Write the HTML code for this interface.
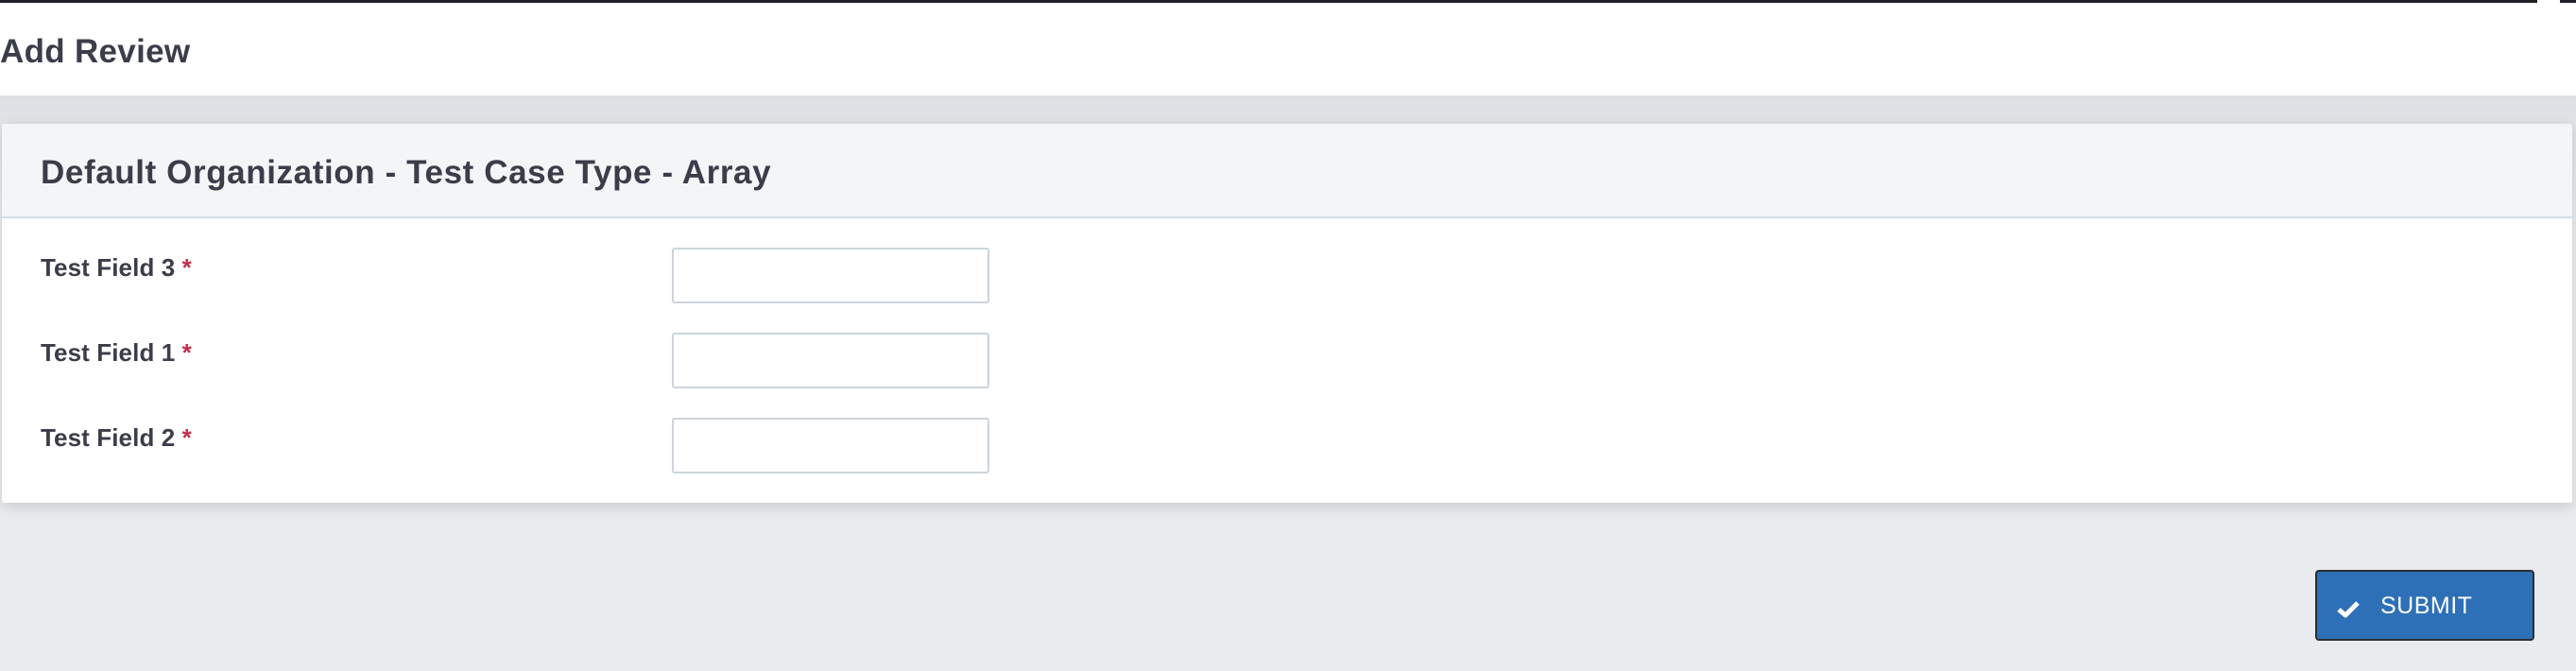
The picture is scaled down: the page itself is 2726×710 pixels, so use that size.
<!DOCTYPE html>
<html><head><meta charset="utf-8"><style>
*{margin:0;padding:0;box-sizing:border-box}
body{width:2726px;height:710px;overflow:hidden;background:#e8ecef;font-family:"Liberation Sans",sans-serif;position:relative;color:#3b3d4a}
.top{position:absolute;left:0;top:0;width:2726px;height:101px;background:#fff}
.line{position:absolute;top:0;left:0;width:2685px;height:3px;background:#1f2225}
.line2{position:absolute;top:0;left:2709px;width:17px;height:3px;background:#1f2225}
.grad{position:absolute;left:0;top:101px;width:2726px;height:120px;background:linear-gradient(#dde1e4,#e8ecef)}
h1{position:absolute;left:0;top:35px;font-size:35px;font-weight:bold;letter-spacing:0.3px;color:#3b3d4a}
.card{position:absolute;left:2px;top:131px;width:2720px;height:401px;background:#fff;border-radius:3px;box-shadow:0 4px 14px rgba(0,0,0,0.15)}
.ch{height:100px;background:#f4f5f7;border-bottom:2px solid #d5dde3;border-radius:3px 3px 0 0}
.ch span{position:absolute;left:41px;top:32px;font-size:35px;font-weight:bold;letter-spacing:0.6px}
.lbl{position:absolute;left:43px;font-size:26px;font-weight:bold;letter-spacing:0.1px}
.lbl b{color:#c0304a}
.in{position:absolute;left:711px;width:336px;height:59px;border:2px solid #cdd4db;border-radius:3px;background:#fff}
.btn{position:absolute;left:2450px;top:603px;width:232px;height:75px;background:#2d70b7;border:2px solid #2a2e33;border-radius:4px;color:#fff;font-size:25px}
.btn span{position:absolute;left:67px;top:22px;letter-spacing:0.5px}
.btn svg{position:absolute;left:20px;top:28px}
</style></head><body>
<div class="top"></div><div class="line"></div><div class="line2"></div>
<div class="grad"></div>
<h1>Add Review</h1>
<div class="card"><div class="ch"><span>Default Organization - Test Case Type - Array</span></div></div>
<div class="lbl" style="top:268px">Test Field 3 <b>*</b></div>
<div class="lbl" style="top:358px">Test Field 1 <b>*</b></div>
<div class="lbl" style="top:448px">Test Field 2 <b>*</b></div>
<div class="in" style="top:262px"></div>
<div class="in" style="top:352px"></div>
<div class="in" style="top:442px"></div>
<div class="btn"><svg width="26" height="22" viewBox="0 0 26 22"><path d="M3 12 L10 18 L23 5" fill="none" stroke="#fff" stroke-width="5" stroke-linejoin="round"/></svg><span>SUBMIT</span></div>
</body></html>
